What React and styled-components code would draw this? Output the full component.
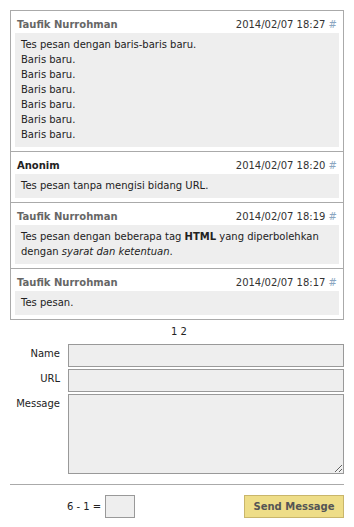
import React from "react";
import styled, { createGlobalStyle } from "styled-components";

const GlobalStyle = createGlobalStyle`
  html, body {
    margin: 0;
    padding: 0;
    background: #fff;
  }
  body {
    font-family: "DejaVu Sans", Verdana, sans-serif;
    font-size: 10px;
    color: #222;
  }
`;

const comments = [
  {
    name: "Taufik Nurrohman",
    linked: true,
    date: "2014/02/07 18:27",
    body: (
      <>
        Tes pesan dengan baris-baris baru.
        <br />Baris baru.
        <br />Baris baru.
        <br />Baris baru.
        <br />Baris baru.
        <br />Baris baru.
        <br />Baris baru.
      </>
    ),
  },
  {
    name: "Anonim",
    linked: false,
    date: "2014/02/07 18:20",
    body: <>Tes pesan tanpa mengisi bidang URL.</>,
  },
  {
    name: "Taufik Nurrohman",
    linked: true,
    date: "2014/02/07 18:19",
    body: (
      <>
        Tes pesan dengan beberapa tag <b>HTML</b> yang diperbolehkan dengan{" "}
        <i>syarat dan ketentuan</i>.
      </>
    ),
  },
  {
    name: "Taufik Nurrohman",
    linked: true,
    date: "2014/02/07 18:17",
    body: <>Tes pesan.</>,
  },
];

export default function App() {
  return (
    <>
      <GlobalStyle />
      <Page>
        <CommentList>
          {comments.map((c, i) => (
            <Comment key={i}>
              <CommentHead>
                <Author $linked={c.linked}>{c.name}</Author>
                <Stamp>
                  {c.date} <Hash>#</Hash>
                </Stamp>
              </CommentHead>
              <CommentBody>{c.body}</CommentBody>
            </Comment>
          ))}
        </CommentList>

        <Pager>1 2</Pager>

        <Form>
          <Label>Name</Label>
          <Input />
          <Label>URL</Label>
          <Input />
          <Label>Message</Label>
          <TextArea />
        </Form>

        <Rule />

        <Footer>
          <Captcha>
            6 - 1 = <CaptchaInput />
          </Captcha>
          <SendButton>Send Message</SendButton>
        </Footer>
      </Page>
    </>
  );
}

const Page = styled.div`
  padding: 10px;
`;

const CommentList = styled.ul`
  list-style: none;
  margin: 0;
  padding: 0;
  border: 1px solid #aaa;
`;

const Comment = styled.li`
  padding: 4px;
  & + & {
    border-top: 1px solid #aaa;
  }
`;

const CommentHead = styled.div`
  display: flex;
  justify-content: space-between;
  align-items: center;
  height: 18px;
  padding: 0 2px;
`;

const Author = styled.span`
  font-weight: bold;
  color: ${(p) => (p.$linked ? "#666" : "#222")};
`;

const Stamp = styled.span`
  color: #333;
`;

const Hash = styled.span`
  color: #8aa6c1;
`;

const CommentBody = styled.div`
  background: #eee;
  padding: 4px 6px 5px;
  line-height: 15px;
`;

const Pager = styled.div`
  text-align: center;
  padding: 5px 0 0 4px;
  height: 19px;
  line-height: 14px;
`;

const Form = styled.div`
  display: grid;
  grid-template-columns: 50px 1fr;
  column-gap: 8px;
  row-gap: 2px;
`;

const Label = styled.label`
  text-align: right;
  padding-top: 4px;
  color: #222;
`;

const fieldStyle = `
  box-sizing: border-box;
  width: 100%;
  background: #eee;
  border: 1px solid #999;
  margin: 0;
  font: inherit;
`;

const Input = styled.input`
  ${fieldStyle}
  height: 23px;
`;

const TextArea = styled.textarea`
  ${fieldStyle}
  height: 80px;
  display: block;
  resize: vertical;
`;

const Rule = styled.hr`
  border: none;
  border-top: 1px solid #aaa;
  margin: 10px 0;
  height: 0;
`;

const Footer = styled.div`
  display: flex;
  justify-content: space-between;
  align-items: center;
  padding-left: 57px;
`;

const Captcha = styled.div`
  display: flex;
  align-items: center;
  gap: 4px;
`;

const CaptchaInput = styled.input`
  ${fieldStyle}
  width: 30px;
  height: 23px;
`;

const SendButton = styled.button`
  height: 23px;
  width: 100px;
  background: #eedd88;
  border: 1px solid #c9b66b;
  color: #555;
  font: bold 10px "DejaVu Sans", Verdana, sans-serif;
  padding: 0;
`;
